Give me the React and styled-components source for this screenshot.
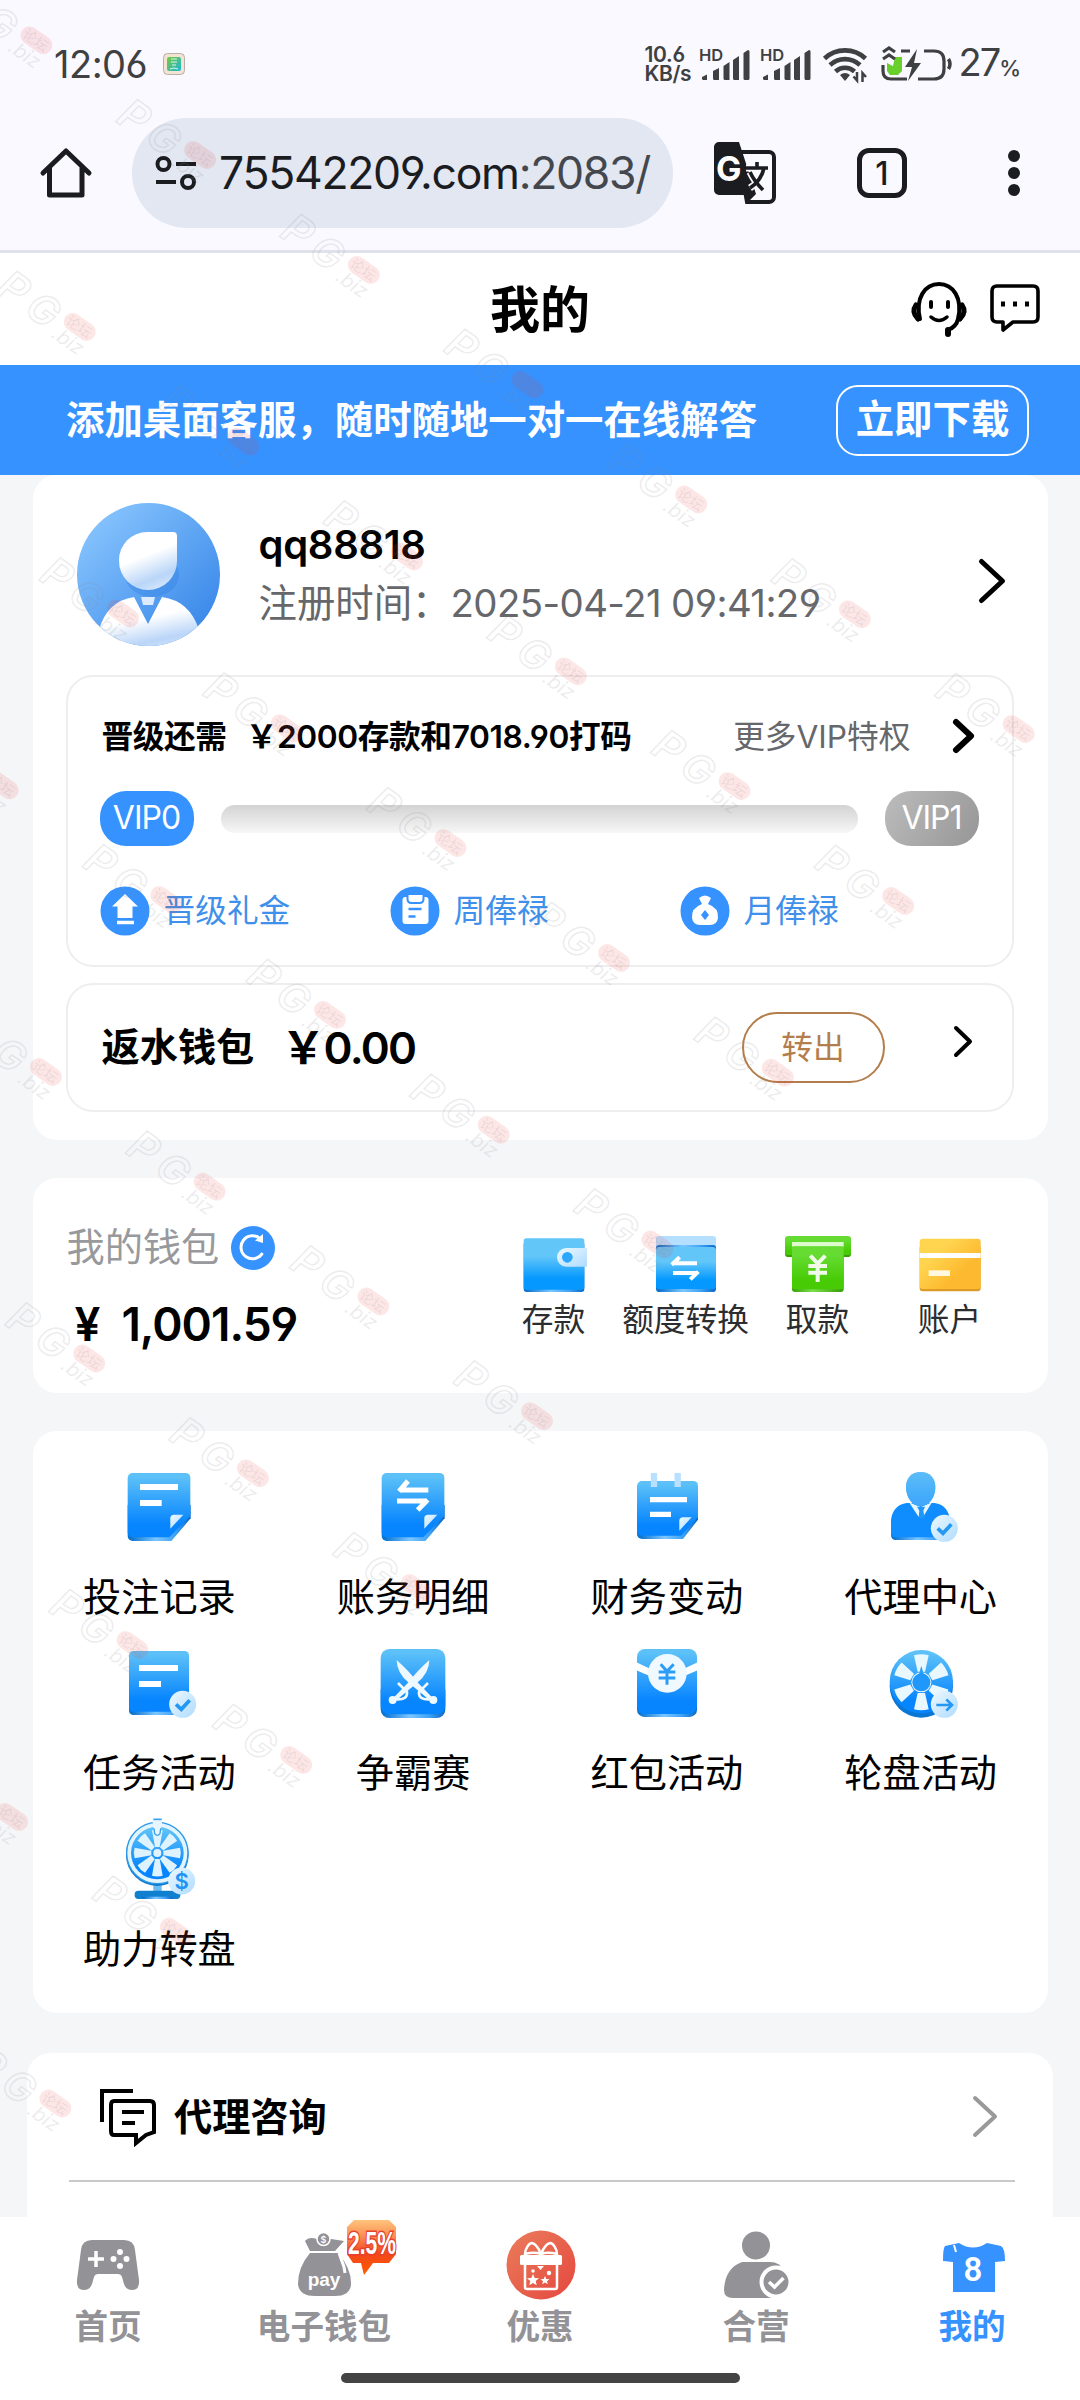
import React from "react"
import styled, { createGlobalStyle } from "styled-components"

const GlobalStyle = createGlobalStyle`
  * {
    box-sizing: border-box;
  }
  body {
    margin: 0;
    font-family: Inter, "Noto Sans CJK SC", sans-serif;
    font-feature-settings: "cv03", "cv04";
    color: #000;
  }
  svg {
    display: block;
    flex: none;
    overflow: visible;
  }
`

/* ---------- shared gradients ---------- */

function Gradients() {
  return (
    <HiddenSvg width="0" height="0">
      <defs>
        <linearGradient id="blue" x1="0" y1="0" x2="0" y2="1">
          <stop offset="0.05" stopColor="#5dc1f8" />
          <stop offset="0.8" stopColor="#0785ff" />
        </linearGradient>
        <linearGradient id="base" x1="0" y1="0" x2="1" y2="0">
          <stop offset="0.05" stopColor="#0b74cf" />
          <stop offset="0.45" stopColor="#7cc6ff" />
          <stop offset="0.75" stopColor="#3ea2f5" />
          <stop offset="1" stopColor="#0b66c4" />
        </linearGradient>
        <linearGradient id="wallet" x1="0" y1="0" x2="0" y2="1">
          <stop offset="0.35" stopColor="#62c6f9" />
          <stop offset="0.78" stopColor="#0599ff" />
        </linearGradient>
        <linearGradient id="ice" x1="0" y1="0" x2="1" y2="1">
          <stop offset="0" stopColor="#eef9ff" />
          <stop offset="1" stopColor="#aedbff" />
        </linearGradient>
        <linearGradient id="green" x1="0" y1="0" x2="0" y2="1">
          <stop offset="0.2" stopColor="#66dc33" />
          <stop offset="0.8" stopColor="#47cb04" />
        </linearGradient>
        <linearGradient id="greenBase" x1="0" y1="0" x2="1" y2="0">
          <stop offset="0" stopColor="#36a004" />
          <stop offset="0.4" stopColor="#7be04d" />
          <stop offset="1" stopColor="#369c05" />
        </linearGradient>
        <linearGradient id="gold" x1="0" y1="0" x2="1" y2="0.9">
          <stop offset="0.3" stopColor="#ffd44f" />
          <stop offset="0.7" stopColor="#fdba30" />
        </linearGradient>
        <linearGradient id="avatarBg" x1="0" y1="0" x2="1" y2="1">
          <stop offset="0.05" stopColor="#8cc8ff" />
          <stop offset="0.85" stopColor="#3d8bea" />
        </linearGradient>
        <linearGradient id="avatarFg" x1="0.3" y1="0" x2="0.7" y2="1">
          <stop offset="0.4" stopColor="#fff" />
          <stop offset="0.8" stopColor="#b9d5f8" />
          <stop offset="1" stopColor="#d8e8fc" />
        </linearGradient>
        <linearGradient id="badge" x1="0" y1="0" x2="0" y2="1">
          <stop offset="0" stopColor="#ffc47c" />
          <stop offset="0.3" stopColor="#f98d52" />
          <stop offset="0.6" stopColor="#f2471d" />
          <stop offset="1" stopColor="#ff5a00" />
        </linearGradient>
        <linearGradient id="gift" x1="0" y1="0" x2="1" y2="1">
          <stop offset="0" stopColor="#ea7d5c" />
          <stop offset="1" stopColor="#e5473e" />
        </linearGradient>
        <linearGradient id="app" x1="0" y1="0" x2="1" y2="1">
          <stop offset="0" stopColor="#77c93d" />
          <stop offset="1" stopColor="#1bb6d8" />
        </linearGradient>
      </defs>
    </HiddenSvg>
  )
}

/* ---------- status bar icons ---------- */

const Signal = () => (
  <svg width="50" height="36" viewBox="0 0 50 36" fill="#3f4042">
    <text x="-1" y="14.500" fontSize="16.500" fontWeight="600">HD</text>
    <path d="M2 31l5-2.500V34H3.500a1.500 1.500 0 0 1-1.500-1.500zM13 25l6-3v12h-4.500a1.500 1.500 0 0 1-1.500-1.500zM23.500 20l6-4v18H25a1.500 1.500 0 0 1-1.500-1.500zM33 14l6-4v24h-4.500a1.500 1.500 0 0 1-1.500-1.500zM43.500 7l4.500-3q1.500 0 1.500 1.500v27a1.500 1.500 0 0 1-1.500 1.500h-3a1.500 1.500 0 0 1-1.500-1.500z" />
  </svg>
)

const Wifi = () => (
  <svg width="48" height="36" viewBox="0 0 48 36" fill="none" stroke="#3f4042" strokeWidth="4.600">
    <path d="M2.500 12.500a30 30 0 0 1 41 0" />
    <path d="M8 19a22 22 0 0 1 30 0" />
    <path d="M13.500 25.500a14 14 0 0 1 19 0" />
    <path d="M23 35l-5-6q5-4 10 0z" fill="#3f4042" stroke="none" />
    <path d="M35 26v8.500l-3.500-4M40.500 36v-9l3.500 4" strokeWidth="2.500" />
  </svg>
)

const Battery = () => (
  <svg width="72" height="38" viewBox="0 0 72 38" fill="none" stroke="#3f4042" strokeWidth="3.200">
    <path d="M2 20v6q0 8 8 8h16M20 6h9M43 6h10q10 0 10 10v8q0 10-10 10H37" />
    <path d="M67.500 14q3 5 0 10" strokeWidth="3.500" />
    <path d="M6 18l6 3 2-9h7v14l-4 4H9l-3-4z" fill="#69cf2c" stroke="none" />
    <path d="M2 7l6-4 6 4M2 14l6-4 6 4" />
    <path d="M36 4L24 22h7l-4 14 13-18h-7z" fill="#3f4042" stroke="none" />
  </svg>
)

/* ---------- browser icons ---------- */

const Home = () => (
  <svg width="50" height="50" viewBox="0 0 50 50" fill="none" stroke="#1b1c1f" strokeWidth="5">
    <path d="M2 25L25 3l23 22M8.500 20v27H41V20" strokeLinejoin="round" strokeLinecap="round" />
  </svg>
)

const SiteInfo = () => (
  <svg width="42" height="36" viewBox="0 0 42 36" fill="none" stroke="#1b1c1f" strokeWidth="4">
    <circle cx="8.500" cy="9" r="6" />
    <circle cx="33" cy="27" r="6" />
    <path d="M21 9h20M1 27h20" />
  </svg>
)

const Translate = () => (
  <svg width="62" height="62" viewBox="0 0 62 62">
    <path d="M24 10h31a5 5 0 0 1 5 5v40a5 5 0 0 1-5 5H33z" fill="none" stroke="#1b1c1f" strokeWidth="4" />
    <path d="M5 0h20l17 52-9 9-3-8H5a5 5 0 0 1-5-5V5a5 5 0 0 1 5-5z" fill="#1b1c1f" />
    <text x="2" y="39" fontSize="34" fontWeight="700" fill="#fff">G</text>
    <path d="M32 26h22M43 20v6M50 26q-3 13-14 20M36 30q4 9 13 18" fill="none" stroke="#faf9ff" strokeWidth="7" />
    <path d="M32 26h22M43 20v6M50 26q-3 13-14 20M36 30q4 9 13 18" fill="none" stroke="#1b1c1f" strokeWidth="3.600" />
  </svg>
)

const More = () => (
  <svg width="12" height="46" viewBox="0 0 12 46" fill="#1b1c1f">
    <circle cx="6" cy="6" r="6" />
    <circle cx="6" cy="23" r="6" />
    <circle cx="6" cy="40" r="6" />
  </svg>
)

/* ---------- header icons ---------- */

const Support = () => (
  <svg width="56" height="56" viewBox="0 0 56 56" fill="none" stroke="#000" strokeWidth="4" strokeLinecap="round">
    <path d="M9 38C4 17 14 3 28 3s24 14 19 35c-1 5-5 9-10 11" />
    <path d="M5 24q-5 7 2 14M51 24q5 7-2 14" strokeWidth="5" />
    <path d="M37 49v4" strokeWidth="6" />
    <path d="M20 21v5M37 21v5" />
    <path d="M20 36q8 7 16 0" strokeWidth="3.500" />
  </svg>
)

const Chat = () => (
  <svg width="50" height="50" viewBox="0 0 50 50" fill="none" stroke="#000" strokeWidth="3.600" strokeLinejoin="round">
    <path d="M7 2h36q5 0 5 5v26q0 5-5 5H23l-10 8v-8H7q-5 0-5-5V7q0-5 5-5z" />
    <path d="M11 20h4M23 20h4M35 20h4" strokeWidth="5" />
  </svg>
)

const Arrow = ({ w, h, stroke, color = "#000" }) => (
  <svg width={w} height={h} viewBox={`0 0 ${w} ${h}`} fill="none" stroke={color} strokeWidth={stroke} strokeLinecap="round" strokeLinejoin="round">
    <path d={`M${stroke / 2} ${stroke / 2}L${w - stroke / 2} ${h / 2}L${stroke / 2} ${h - stroke / 2}`} />
  </svg>
)

const Avatar = () => (
  <svg width="143" height="143" viewBox="0 0 143 143">
    <clipPath id="avatarClip"><circle cx="71.500" cy="71.500" r="71.500" /></clipPath>
    <circle cx="71.500" cy="71.500" r="71.500" fill="url(#avatarBg)" />
    <g clipPath="url(#avatarClip)">
      <ellipse cx="75" cy="72" rx="27" ry="22" fill="#2e7fe2" opacity="0.35" />
      <path d="M42 57a28 28 0 0 1 28-28h26a4 4 0 0 1 4 4v25a29 29 0 0 1-58 0z" fill="url(#avatarFg)" />
      <path d="M57 94q-27 4-35 33v20h100v-20q-9-29-37-33L71 121z" fill="url(#avatarFg)" />
      <path d="M64 94h14l-2 8H66z" fill="#dcebfd" />
    </g>
  </svg>
)

/* ---------- vip reward icons ---------- */

const Reward = ({ children }) => (
  <svg width="50" height="50" viewBox="0 0 50 50">
    <circle cx="25" cy="25" r="24.500" fill="#3592ff" />
    {children}
  </svg>
)

const rewards = [
  {
    label: "晋级礼金",
    icon: (
      <Reward>
        <path d="M25 8l13 12.500h-5.500V32h-15V20.500H12z" fill="#fff" />
        <path d="M17 36.500h17" stroke="#fff" strokeWidth="3.500" />
      </Reward>
    ),
  },
  {
    label: "周俸禄",
    icon: (
      <Reward>
        <rect x="12.500" y="11" width="26" height="27" rx="3" fill="#fff" />
        <path d="M17.500 9v4q0 4 4 4h8q4 0 4-4V9" fill="#fff" stroke="#3592ff" strokeWidth="2" />
        <path d="M18.500 23h13M18.500 30.500h7" stroke="#3592ff" strokeWidth="2.500" />
      </Reward>
    ),
  },
  {
    label: "月俸禄",
    icon: (
      <Reward>
        <path d="M19 12q6-5 12 0l-3 6q11 4 10 14-1 7-8 7H20q-7 0-8-7-1-10 10-14z" fill="#fff" />
        <path d="M25 24l4 5-4 5-4-5z" fill="#3592ff" />
      </Reward>
    ),
  },
]

const Refresh = () => (
  <svg width="44" height="44" viewBox="0 0 44 44">
    <circle cx="22" cy="22" r="22" fill="#3592ff" />
    <path d="M31.500 27a11.500 11.500 0 1 1-2-14" fill="none" stroke="#fff" strokeWidth="3" />
    <path d="M24 14.500l8 2.500V8z" fill="#fff" />
  </svg>
)

/* ---------- wallet icons ---------- */

const Transfer = () => (
  <g fill="none" stroke="#fff" strokeWidth="12">
    <path d="M588 115H516M512 119L536 97" />
    <path d="M516 144H588M592 140L568 163" />
  </g>
)

const walletActions = [
  {
    label: "存款",
    icon: (
      <svg width="66" height="58" viewBox="60 30 198 174">
        <rect x="68" y="50" width="182" height="151" rx="9" fill="url(#base)" />
        <rect x="68" y="40" width="182" height="154" rx="8" fill="url(#wallet)" />
        <path d="M196 69h62v56h-62a28 28 0 0 1 0-56z" fill="url(#ice)" />
        <circle cx="199" cy="97" r="16" fill="#2ba8fb" />
      </svg>
    ),
  },
  {
    label: "额度转换",
    icon: (
      <svg width="66" height="58" viewBox="456 30 198 174">
        <rect x="465" y="33" width="180" height="60" rx="10" fill="#b4dfff" />
        <rect x="465" y="60" width="180" height="141" rx="10" fill="url(#base)" />
        <rect x="465" y="66" width="180" height="126" rx="10" fill="url(#wallet)" />
        <Transfer />
      </svg>
    ),
  },
  {
    label: "取款",
    icon: (
      <svg width="66" height="58" viewBox="852 30 198 174">
        <rect x="852" y="36" width="198" height="60" rx="10" fill="#36a004" />
        <rect x="852" y="33" width="198" height="57" rx="10" fill="url(#green)" />
        <rect x="873" y="51" width="155" height="14" fill="#dcfacb" />
        <rect x="873" y="80" width="155" height="121" rx="9" fill="url(#greenBase)" />
        <rect x="873" y="64" width="155" height="129" rx="8" fill="url(#green)" />
        <path d="M928 92l22 24 23-24M950 116v55M922 123h56M922 143h56" fill="none" stroke="#effbe8" strokeWidth="12" />
      </svg>
    ),
  },
  {
    label: "账户",
    icon: (
      <svg width="66" height="58" viewBox="1248 30 198 174">
        <rect x="1256" y="60" width="183" height="139" rx="9" fill="#dc9a26" />
        <rect x="1256" y="41" width="183" height="151" rx="9" fill="url(#gold)" />
        <rect x="1256" y="84" width="183" height="15" fill="#fff" />
        <rect x="1283" y="136" width="64" height="17" fill="#fff8e0" />
      </svg>
    ),
  },
]

/* ---------- menu icons ---------- */

const Check = ({ x, y }) => (
  <g transform={`translate(${x} ${y})`}>
    <circle r="40.500" fill="url(#ice)" />
    <path d="M-20 0L-4 15 21-12" fill="none" stroke="#2498f3" strokeWidth="11" />
  </g>
)

const Blade = () => (
  <>
    <path d="M891 615q42 38 58 62l48 50-8 8-60-50q-38-30-38-70z" fill="#eef8ff" />
    <circle cx="1001" cy="735" r="12" fill="#eef8ff" />
    <path d="M985 684l-27 27q-2 24 32 22" fill="none" stroke="#eef8ff" strokeWidth="8" />
  </>
)

const spokes = (count) => Array.from({ length: count }, (_, i) => (360 / count) * i)

const menu = [
  {
    label: "投注记录",
    icon: (
      <svg width="80" height="84" viewBox="60 30 240 252">
        <path d="M86 150H275V190L217 258H101a15 15 0 0 1-15-15z" fill="url(#base)" />
        <path d="M101 54H260a14 14 0 0 1 14 14V182L211 247H101a15 15 0 0 1-15-15V69a15 15 0 0 1 15-15z" fill="url(#blue)" />
        <path d="M123 96H237M123 144H188" stroke="#fff" strokeWidth="18" />
        <path d="M214 221V190q0-11 11-11h28z" fill="url(#ice)" />
      </svg>
    ),
  },
  {
    label: "账务明细",
    icon: (
      <svg width="80" height="84" viewBox="820 30 240 252">
        <path d="M846 150H1035V190L977 258H861a15 15 0 0 1-15-15z" fill="url(#base)" />
        <path d="M861 54H1020a14 14 0 0 1 14 14V182L971 247H861a15 15 0 0 1-15-15V69a15 15 0 0 1 15-15z" fill="url(#blue)" />
        <path d="M986 105H902M898 109l27-31M892 138H980M984 134l-30 31" fill="none" stroke="#fff" strokeWidth="15" />
        <path d="M974 221V190q0-11 11-11h28z" fill="url(#ice)" />
      </svg>
    ),
  },
  {
    label: "财务变动",
    icon: (
      <svg width="80" height="84" viewBox="381 720 240 252">
        <path d="M411 850H594V884L549 942H426a15 15 0 0 1-15-15z" fill="url(#base)" />
        <path d="M426 768H580a14 14 0 0 1 14 14V877L543 932H426a15 15 0 0 1-15-15V783a15 15 0 0 1 15-15z" fill="url(#blue)" />
        <path d="M462 744v42M533 744v42" stroke="#b9e0ff" strokeWidth="19" />
        <path d="M450 824H561M450 868H513" stroke="#fff" strokeWidth="16" />
        <path d="M538 917V888q0-11 11-11h26z" fill="url(#ice)" />
      </svg>
    ),
  },
  {
    label: "代理中心",
    icon: (
      <svg width="80" height="84" viewBox="1143 720 240 252">
        <path d="M1173 900h177v45h-163a14 14 0 0 1-14-14z" fill="url(#base)" />
        <path d="M1173 925v-41q6-44 47-50h84q40 6 46 50v53h-164a13 13 0 0 1-13-12z" fill="#0f8dff" />
        <path d="M1227 832l29 44 6-28 7 28 27-44-34 14z" fill="#e8f6ff" />
        <path d="M1251 845h24l-5 12 4 22h-18l2-22z" fill="#1f97f8" />
        <path d="M1218 786c0-28 18-45 44-45s44 17 44 45c0 30-18 57-44 57s-44-27-44-57z" fill="url(#blue)" />
        <path d="M1218 786c0-28 18-45 44-45s44 17 44 45c0 30-18 57-44 57s-44-27-44-57z" fill="#5ab9f8" opacity="0.7" />
        <Check x={1333} y={910} />
      </svg>
    ),
  },
  {
    label: "任务活动",
    icon: (
      <svg width="80" height="84" viewBox="60 558 240 252">
        <rect x="90" y="700" width="180" height="80" rx="13" fill="url(#base)" />
        <rect x="90" y="588" width="180" height="182" rx="13" fill="url(#blue)" />
        <path d="M120 639H237M120 687H186" stroke="#fff" strokeWidth="18" />
        <Check x={251} y={748} />
      </svg>
    ),
  },
  {
    label: "争霸赛",
    icon: (
      <svg width="80" height="84" viewBox="820 558 240 252">
        <rect x="843" y="680" width="194" height="109" rx="26" fill="url(#base)" />
        <rect x="843" y="582" width="194" height="196" rx="26" fill="url(#blue)" />
        <Blade />
        <g transform="translate(1880 0) scale(-1 1)"><Blade /></g>
      </svg>
    ),
  },
  {
    label: "红包活动",
    icon: (
      <svg width="80" height="84" viewBox="381 1248 240 252">
        <rect x="411" y="1380" width="180" height="96" rx="22" fill="url(#base)" />
        <rect x="411" y="1272" width="180" height="195" rx="24" fill="url(#blue)" />
        <path d="M409 1312l51 24h82l51-24v24l-56 24h-72l-56-24z" fill="#fff" />
        <circle cx="502" cy="1345" r="58" fill="#f0f9ff" />
        <path d="M482 1318l19 21 20-21M501 1339v40M476 1341h50M476 1359h50" fill="none" stroke="#2b9df7" strokeWidth="9" />
      </svg>
    ),
  },
  {
    label: "轮盘活动",
    icon: (
      <svg width="80" height="84" viewBox="1143 1248 240 252">
        <circle cx="1264" cy="1383" r="95" fill="#0b77d4" />
        <circle cx="1264" cy="1370" r="95" fill="url(#blue)" />
        {spokes(6).map((deg) => (
          <path key={deg} d="M1242 1291q22-6 44 0l-11 49h-22z" fill="#e9f7ff" transform={`rotate(${deg} 1264 1372)`} />
        ))}
        <circle cx="1264" cy="1372" r="30" fill="#e9f7ff" />
        <path d="M1264 1322l8 28h-16z" fill="#2aa0f7" />
        <circle cx="1264" cy="1372" r="27" fill="#1f97fb" />
        <circle cx="1333" cy="1438" r="40.500" fill="url(#ice)" />
        <path d="M1309 1440h46M1339 1423l17 17-17 17" fill="none" stroke="#2498f3" strokeWidth="8" />
      </svg>
    ),
  },
  {
    label: "助力转盘",
    icon: (
      <svg width="80" height="84" viewBox="60 1086 240 252">
        <rect x="163" y="1280" width="25" height="34" fill="#6dbdf5" />
        <rect x="107" y="1307" width="137" height="25" rx="11" fill="#0f7fd0" />
        <rect x="130" y="1325" width="90" height="7" fill="url(#base)" />
        <circle cx="175" cy="1199" r="94" fill="#1379cb" />
        <circle cx="175" cy="1194" r="92" fill="#e2f5ff" stroke="#2b9ae8" strokeWidth="4" />
        <circle cx="175" cy="1194" r="79" fill="url(#blue)" />
        {spokes(8).map((deg) => (
          <path key={deg} d="M159 1126q16-5 32 0l-9 50h-14z" fill="#dff3ff" transform={`rotate(${deg} 175 1194)`} />
        ))}
        <circle cx="175" cy="1194" r="12" fill="#dff3ff" />
        <path d="M160 1095h30l-6 38q-9 12-18 0z" fill="#e8f7ff" />
        <path d="M163 1093h25" stroke="#3aa3ea" strokeWidth="5" />
        <path d="M165 1120l2 16q8 10 16 0l2-16" fill="none" stroke="#3aa3ea" strokeWidth="4" />
        <circle cx="248" cy="1278" r="40.500" fill="url(#ice)" />
        <text x="248" y="1301" fontSize="66" fontWeight="600" textAnchor="middle" fill="#2093f5">$</text>
      </svg>
    ),
  },
]

const Consult = () => (
  <svg width="56" height="56" viewBox="0 0 56 56" fill="none" stroke="#000" strokeWidth="4">
    <path d="M2 33V2h31" />
    <path d="M14 12h36q4 0 4 4v27l-8 3-10 8v-8H14q-3 0-3-4V16q0-4 3-4z" />
    <path d="M22 23h22M22 34h13" />
  </svg>
)

/* ---------- tab icons ---------- */

const tabs = [
  {
    label: "首页",
    icon: (
      <svg width="150" height="84" viewBox="0 0 150 84">
        <path d="M59 23h32q10 0 11 10l4 30q1 10-7 10-6 0-8-6l-2-7q-1-3-4-3H65q-3 0-4 3l-2 7q-2 6-8 6-8 0-7-10l4-30q1-10 11-10z" fill="#929297" />
        <path d="M63 34v16M55 42h16" stroke="#fff" strokeWidth="3.500" />
        <g fill="#fff">
          <circle cx="87" cy="35" r="3" />
          <circle cx="87" cy="49" r="3" />
          <circle cx="80.500" cy="42" r="3" />
          <circle cx="93.500" cy="42" r="3" />
        </g>
      </svg>
    ),
  },
  {
    label: "电子钱包",
    icon: (
      <svg width="150" height="84" viewBox="0 0 150 84">
        <path d="M56 24q4-5 12-2h14l13 2-9 10H61z" fill="#929297" />
        <path d="M61 36h28q13 15 13 30 0 13-16 13H66q-16 0-17-12 0-17 12-31z" fill="#929297" />
        <path d="M90 36l5 14 1 6" fill="none" stroke="#fff" strokeWidth="3" />
        <circle cx="74.500" cy="22" r="6.500" fill="#929297" stroke="#fff" strokeWidth="1.500" />
        <text x="74.500" y="25.500" fontSize="9" textAnchor="middle" fill="#fff">$</text>
        <text x="75" y="69" fontSize="19" textAnchor="middle" fill="#fff" fontFamily="Liberation Sans">pay</text>
        <path d="M105 3h35l7 7v27l-7 9h-16l-9 12-3-12h-8l-6-9V10z" fill="url(#badge)" />
        <text x="99" y="37" fontSize="31" fontWeight="700" textLength="48" lengthAdjust="spacingAndGlyphs" fill="#fff" fontFamily="Liberation Sans" stroke="#e8402c" strokeWidth="3" paintOrder="stroke">2.5%</text>
      </svg>
    ),
  },
  {
    label: "优惠",
    icon: (
      <svg width="150" height="84" viewBox="0 0 150 84">
        <circle cx="76" cy="48" r="34.500" fill="url(#gift)" />
        <path d="M76 37c-6-2-12-1-16 0 0-5 4-11 7-11 4 1 7 6 9 11 2-5 5-10 9-11 3 0 7 6 7 11-4-1-10-2-16 0z" fill="none" stroke="#fff" strokeWidth="2.500" />
        <rect x="55" y="38" width="42" height="10" rx="1.500" fill="#fff" />
        <path d="M60 48v22q0 2 2 2h28q2 0 2-2V48" fill="none" stroke="#fff" strokeWidth="2.500" />
        <g fill="#fff">
          <path d="M68 57l1.700 4 4.300.300-3.300 2.800 1 4.200-3.700-2.300-3.700 2.300 1-4.200-3.300-2.800 4.300-.300z" />
          <path d="M80 59l1.300 3 3.200.200-2.500 2 .800 3.100-2.800-1.700-2.800 1.700.800-3.100-2.500-2 3.200-.200z" />
          <circle cx="68" cy="54" r="1.800" />
          <circle cx="84" cy="56" r="2.200" />
          <path d="M72 49h7l-3.500 4z" />
        </g>
      </svg>
    ),
  },
  {
    label: "合营",
    icon: (
      <svg width="150" height="84" viewBox="0 0 150 84">
        <circle cx="75" cy="28.500" r="14" fill="#929297" />
        <path d="M61 45h28q10 0 14 9v20q0 7-9 7H52q-9 0-9-8 1-22 18-28z" fill="#929297" />
        <circle cx="95" cy="65" r="14.500" fill="#929297" stroke="#fff" strokeWidth="4" />
        <path d="M88 65l5.500 5 9-9" fill="none" stroke="#fff" strokeWidth="3.500" />
      </svg>
    ),
  },
  {
    label: "我的",
    active: true,
    icon: (
      <svg width="150" height="84" viewBox="0 0 150 84">
        <path d="M62 26q14 9 28 0l14 3q4 2 4 15l-10 1v30H56V45l-10-1q0-13 2-15z" fill="#3592ff" />
        <path d="M57 28l2 7" stroke="#fff" strokeWidth="2" />
        <text x="76" y="64" fontSize="33" fontWeight="600" textAnchor="middle" fill="#fff" fontFamily="Roboto">8</text>
      </svg>
    ),
  },
]

/* ---------- watermark ---------- */

function Watermark() {
  const marks = []
  for (let n = 0; n < 9; n++) {
    for (let m = 0; m <= n + 6; m++) {
      const x = 36 + m * 163.7 - n * 284.1
      const y = 40 + m * 114.8 + n * 57
      if (x > -30 && y < 2200) marks.push([x, y])
    }
  }
  return (
    <WatermarkSvg width="1080" height="2400" viewBox="0 0 1080 2400">
      {marks.map(([x, y]) => (
        <g key={`${x},${y}`} transform={`translate(${x} ${y}) rotate(35)`}>
          <g fill="none" stroke="#8a8a90" strokeOpacity="0.17" strokeWidth="1.500" fontWeight="600" fontStyle="italic">
            <text x="-89" y="21" fontSize="42">P</text>
            <text x="-54" y="21" fontSize="40">G</text>
          </g>
          <rect x="-17" y="-9" width="35" height="18" rx="9" fill="#ef3b3b" fillOpacity="0.13" />
          <text x="0" y="5.500" fontSize="14" textAnchor="middle" fill="#777" fillOpacity="0.14">论坛</text>
          <text x="-18" y="25" fontSize="20" fontStyle="italic" fill="#8a8a90" fillOpacity="0.16">.biz</text>
        </g>
      ))}
    </WatermarkSvg>
  )
}

export default function App() {
  return (
    <Screen>
      <GlobalStyle />
      <Gradients />

      <StatusBar>
        <Clock>12:06</Clock>
        <svg width="22" height="22" viewBox="0 0 22 22">
          <rect x="0.500" y="0.500" width="21" height="21" rx="4" fill="#f3e3d3" stroke="#a89f98" strokeWidth="0.800" />
          <rect x="4" y="4" width="14" height="14" rx="2" fill="url(#app)" />
          <path d="M8 6h6M8 9h6M9 12h4M7 16q4-2 8 0" stroke="#d9f5ee" strokeWidth="1" fill="none" />
        </svg>
        <StatusRight>
          <Speed>
            <span>10.6</span>
            <span>KB/s</span>
          </Speed>
          <Signal />
          <Signal />
          <Wifi />
          <Battery />
          <Percent>27<small>%</small></Percent>
        </StatusRight>
      </StatusBar>

      <Toolbar>
        <Home />
        <UrlBar>
          <SiteInfo />
          <Url>75542209.com<i>:2083/</i></Url>
        </UrlBar>
        <Translate />
        <TabCount>1</TabCount>
        <More />
      </Toolbar>

      <Header>
        <HeaderSide />
        <Title>我的</Title>
        <HeaderSide>
          <Support />
          <Chat />
        </HeaderSide>
      </Header>

      <Banner>
        <BannerText>添加桌面客服，随时随地一对一在线解答</BannerText>
        <DownloadButton>立即下载</DownloadButton>
      </Banner>

      <Content>
        <ProfileCard>
          <Profile>
            <Avatar />
            <ProfileText>
              <UserName>qq88818</UserName>
              <Registered>注册时间：<b>2025-04-21 09:41:29</b></Registered>
            </ProfileText>
            <Arrow w={26} h={44} stroke={5} />
          </Profile>

          <VipBox>
            <VipTop>
              <Need>晋级还需</Need>
              <Need>￥2000存款和7018.90打码</Need>
              <Privilege>更多VIP特权</Privilege>
              <Arrow w={21} h={34} stroke={6} />
            </VipTop>
            <VipLevels>
              <Level>VIP0</Level>
              <Progress />
              <Level $next>VIP1</Level>
            </VipLevels>
            <Rewards>
              {rewards.map((item) => (
                <RewardItem key={item.label}>
                  {item.icon}
                  <span>{item.label}</span>
                </RewardItem>
              ))}
            </Rewards>
          </VipBox>

          <RebateBox>
            <RebateTitle>返水钱包</RebateTitle>
            <RebateAmount>￥0.00</RebateAmount>
            <TransferButton>转出</TransferButton>
            <Arrow w={18} h={31} stroke={4} />
          </RebateBox>
        </ProfileCard>

        <WalletCard>
          <Balance>
            <BalanceLabel>
              <span>我的钱包</span>
              <Refresh />
            </BalanceLabel>
            <BalanceAmount><span>¥</span>1,001.59</BalanceAmount>
          </Balance>
          <WalletActions>
            {walletActions.map((item) => (
              <WalletAction key={item.label}>
                {item.icon}
                {item.label}
              </WalletAction>
            ))}
          </WalletActions>
        </WalletCard>

        <MenuCard>
          {menu.map((item) => (
            <MenuItem key={item.label}>
              {item.icon}
              {item.label}
            </MenuItem>
          ))}
        </MenuCard>

        <ListCard>
          <ListRow>
            <Consult />
            <span>代理咨询</span>
            <Arrow w={24} h={41} stroke={4} color="#999" />
          </ListRow>
        </ListCard>
      </Content>

      <TabBar>
        <Tabs>
          {tabs.map((tab) => (
            <Tab key={tab.label} $active={tab.active}>
              {tab.icon}
              {tab.label}
            </Tab>
          ))}
        </Tabs>
        <HomeIndicator />
      </TabBar>

      <Watermark />
    </Screen>
  )
}

const Screen = styled.div`
  position: relative;
  display: flex;
  flex-direction: column;
  width: 1080px;
  height: 2400px;
  overflow: hidden;
  background: #f4f6f8;
`

const HiddenSvg = styled.svg`
  position: absolute;
`

const WatermarkSvg = styled.svg`
  position: absolute;
  inset: 0;
  pointer-events: none;
`

const StatusBar = styled.div`
  display: flex;
  align-items: center;
  flex: none;
  height: 118px;
  padding: 9px 61px 0 54px;
  background: #faf9ff;
  color: #3f4042;
`

const Clock = styled.div`
  width: 109px;
  font-size: 38px;
  letter-spacing: -0.5px;
`

const StatusRight = styled.div`
  display: flex;
  align-items: center;
  margin-left: auto;
`

const Speed = styled.div`
  display: flex;
  flex-direction: column;
  width: 56px;
  font-size: 21px;
  font-weight: 600;
  line-height: 19px;
  letter-spacing: -0.3px;

  & ~ svg {
    margin-right: 11px;
  }
  & ~ svg:nth-of-type(4) {
    margin-right: 5px;
  }
`

const Percent = styled.div`
  padding-top: 3px;
  font-size: 38px;
  line-height: 38px;
  letter-spacing: -2px;

  small {
    font-size: 22px;
    font-weight: 500;
  }
`

const Toolbar = styled.div`
  display: flex;
  align-items: center;
  flex: none;
  height: 135px;
  padding: 0 60px 22px 41px;
  border-bottom: 3px solid #dfe2eb;
  background: #faf9ff;
`

const UrlBar = styled.div`
  display: flex;
  align-items: center;
  gap: 22px;
  width: 541px;
  height: 110px;
  margin: 0 41px;
  padding-left: 23px;
  border-radius: 55px;
  background: #e2e7f2;
`

const Url = styled.div`
  font-size: 44.5px;
  letter-spacing: -1.3px;
  white-space: nowrap;
  color: #1b1c1f;

  i {
    font-style: normal;
    color: #44474e;
  }
`

const TabCount = styled.div`
  display: flex;
  align-items: center;
  justify-content: center;
  width: 50px;
  height: 50px;
  margin: 0 101px 0 81px;
  border: 5px solid #1b1c1f;
  border-radius: 12px;
  font-size: 32px;
  font-weight: 500;
  color: #1b1c1f;
`

const Header = styled.div`
  display: flex;
  align-items: center;
  flex: none;
  height: 112px;
  background: #fff;
`

const HeaderSide = styled.div`
  display: flex;
  align-items: center;
  justify-content: flex-end;
  flex: 1;
  gap: 23px;
  padding-right: 40px;
`

const Title = styled.div`
  padding-top: 2px;
  font-size: 50px;
  font-weight: 600;
  line-height: 60px;
`

const Banner = styled.div`
  display: flex;
  align-items: center;
  justify-content: space-between;
  flex: none;
  height: 110px;
  padding: 0 51px 0 66px;
  background: #3592ff;
  color: #fff;
  font-size: 38.4px;
  font-weight: 600;
`

const BannerText = styled.div`
  padding-bottom: 6px;
`

const DownloadButton = styled.button`
  width: 193px;
  height: 71px;
  padding: 0 0 8px;
  border: 2px solid #fff;
  border-radius: 22px;
  background: none;
  color: #fff;
  font: inherit;
`

const Content = styled.div`
  display: flex;
  flex-direction: column;
  align-items: center;
  flex: 1;
  min-height: 0;
  overflow: hidden;
`

const Card = styled.div`
  flex: none;
  width: 1015px;
  border-radius: 24px;
  background: #fff;
`

const ProfileCard = styled(Card)`
  height: 665px;
  padding: 28px 34px 0 33px;
`

const Profile = styled.div`
  display: flex;
  align-items: center;
  height: 143px;
  padding: 0 9px 0 11px;

  & > svg:last-child {
    margin-top: 12px;
  }
`

const ProfileText = styled.div`
  flex: 1;
  padding-left: 39px;
`

const UserName = styled.div`
  font-size: 40px;
  font-weight: 600;
  line-height: 57px;
  letter-spacing: -0.3px;
`

const Registered = styled.div`
  font-size: 38.4px;
  line-height: 60px;
  color: #66676b;

  b {
    font-weight: 400;
    letter-spacing: -0.6px;
  }
`

const OutlineBox = styled.div`
  border: 2px solid #eee;
  border-radius: 27px;
`

const VipBox = styled(OutlineBox)`
  height: 292px;
  margin-top: 29px;
  padding: 34px 33px 0 32px;
`

const VipTop = styled.div`
  display: flex;
  align-items: center;
  height: 50px;
  padding: 0 5px 0 2px;
`

const Need = styled.div`
  margin-right: 19px;
  padding-bottom: 5px;
  font-size: 31.7px;
  font-weight: 600;
  letter-spacing: -0.4px;
  white-space: nowrap;
`

const Privilege = styled.div`
  margin: 0 42px 0 auto;
  padding-bottom: 5px;
  font-size: 31.7px;
  white-space: nowrap;
  color: #66676b;
`

const VipLevels = styled.div`
  display: flex;
  align-items: center;
  gap: 27px;
  margin-top: 30px;
`

const Level = styled.div`
  width: 94px;
  height: 55px;
  border-radius: 26px;
  background: ${({ $next }) => ($next ? "linear-gradient(120deg, #bcbcbc, #969696)" : "#3592ff")};
  color: #fff;
  font-size: 32px;
  line-height: 54px;
  letter-spacing: -1px;
  text-align: center;
`

const Progress = styled.div`
  flex: 1;
  height: 28px;
  border-radius: 14px;
  background: linear-gradient(#d3d3d3, #f7f7f7);
`

const Rewards = styled.div`
  display: grid;
  grid-template-columns: repeat(3, 290px);
  margin-top: 39px;
`

const RewardItem = styled.div`
  display: flex;
  align-items: center;
  gap: 14px;
  font-size: 31.7px;
  color: #3f90ea;

  span {
    padding-bottom: 5px;
  }
`

const RebateBox = styled(OutlineBox)`
  display: flex;
  align-items: center;
  height: 129px;
  margin-top: 16px;
  padding: 0 40px 0 34px;

  & > svg {
    margin: -12px 0 0 69px;
  }
`

const RebateTitle = styled.div`
  padding-bottom: 6px;
  font-size: 38.2px;
  font-weight: 600;
`

const RebateAmount = styled.div`
  margin-left: 27px;
  padding-bottom: 6px;
  font-size: 44px;
  font-weight: 600;
  letter-spacing: -1.7px;
`

const TransferButton = styled.button`
  width: 143px;
  height: 71px;
  margin-left: auto;
  padding: 0 0 6px;
  border: 2px solid #b47d4c;
  border-radius: 36px;
  background: none;
  color: #b47d4c;
  font: inherit;
  font-size: 31.7px;
`

const WalletCard = styled(Card)`
  display: flex;
  justify-content: space-between;
  height: 215px;
  margin-top: 38px;
  padding: 48px 32px 0 34px;
`

const Balance = styled.div``

const BalanceLabel = styled.div`
  display: flex;
  align-items: center;
  gap: 12px;
  height: 44px;
  font-size: 38.2px;
  color: #98999c;

  span {
    padding-bottom: 8px;
  }
`

const BalanceAmount = styled.div`
  display: flex;
  gap: 22px;
  margin-top: 24px;
  padding-left: 8px;
  font-size: 46px;
  font-weight: 600;
  line-height: 60px;
  letter-spacing: -1px;
`

const WalletActions = styled.div`
  display: grid;
  grid-template-columns: repeat(4, 132px);
  margin-top: 9px;
`

const WalletAction = styled.div`
  display: flex;
  flex-direction: column;
  align-items: center;
  gap: 6px;
  height: 110px;
  font-size: 31.7px;
  line-height: 42px;
  color: #2c2d30;
`

const MenuCard = styled(Card)`
  display: grid;
  grid-template-columns: repeat(4, 1fr);
  grid-auto-rows: 176px;
  align-content: start;
  height: 582px;
  margin-top: 38px;
  padding-top: 34px;
`

const MenuItem = styled.div`
  display: flex;
  flex-direction: column;
  align-items: center;
  gap: 22px;
  font-size: 38.2px;
  line-height: 52px;
`

const ListCard = styled(Card)`
  width: 1026px;
  height: 300px;
  margin-top: 40px;
  padding: 0 38px 0 42px;
`

const ListRow = styled.div`
  display: flex;
  align-items: center;
  height: 129px;
  padding: 0 18px 0 31px;
  border-bottom: 2px solid #c8c9cb;
  font-size: 38.2px;
  font-weight: 600;

  span {
    flex: 1;
    margin-left: 18px;
    padding-bottom: 4px;
  }
`

const TabBar = styled.div`
  flex: none;
  height: 183px;
  background: #fff;
`

const Tabs = styled.div`
  display: grid;
  grid-template-columns: repeat(5, 1fr);
`

const Tab = styled.div`
  display: flex;
  flex-direction: column;
  align-items: center;
  gap: 6px;
  font-size: 33.6px;
  font-weight: 600;
  line-height: 40px;
  color: ${({ $active }) => ($active ? "#3592ff" : "#929297")};
`

const HomeIndicator = styled.div`
  width: 399px;
  height: 10px;
  margin: 26px auto 0;
  border-radius: 5px;
  background: #444;
`
